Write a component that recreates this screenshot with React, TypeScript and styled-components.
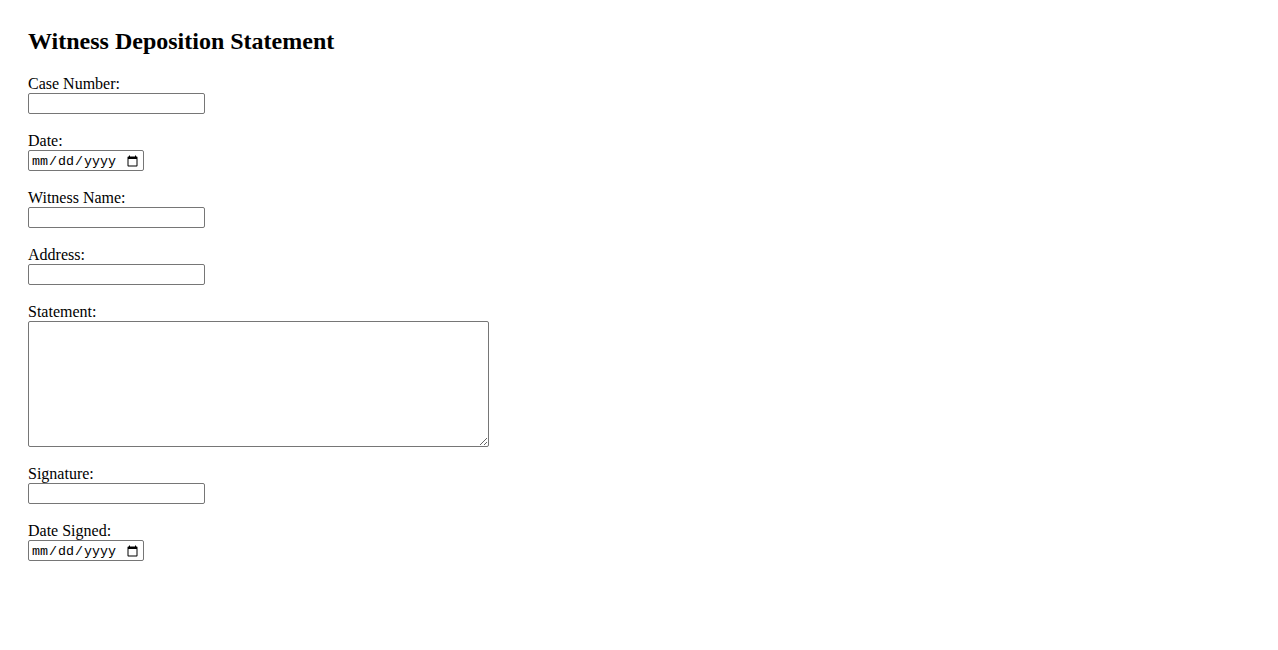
import React from "react";
import styled, { createGlobalStyle } from "styled-components";

const Global = createGlobalStyle`
  html, body { margin: 0; padding: 0; background: #fff; }
  body {
    padding: 28px;
    font-family: "Liberation Serif", "Times New Roman", serif;
    font-size: 16px;
    color: #000;
  }
`;

const Page = styled.div`
  display: flex;
  flex-direction: column;
`;

const Title = styled.h2`
  margin: 0 0 20px 0;
  font-size: 24px;
  font-weight: bold;
  line-height: 27px;
`;

const Form = styled.form`
  display: flex;
  flex-direction: column;
  gap: 18px;
`;

const Field = styled.div`
  display: flex;
  flex-direction: column;
  align-items: flex-start;
`;

const Label = styled.label`
  display: block;
  line-height: 18px;
  height: 18px;
`;

const TextInput = styled.input`
  box-sizing: border-box;
  width: 177px;
  height: 21px;
  margin: 0;
  padding: 1px 2px;
  border: 1px solid #767676;
  border-radius: 2px;
  font-family: "Liberation Sans", Arial, sans-serif;
  font-size: 13.33px;
  background: #fff;
`;

const DateInput = styled.input`
  box-sizing: border-box;
  width: 116px;
  height: 21px;
  margin: 0;
  padding: 2px 2px 0 2px;
  border: 1px solid #767676;
  border-radius: 2px;
  font-family: "Liberation Mono", monospace;
  font-size: 13.33px;
  background: #fff;
`;

const TextArea = styled.textarea`
  box-sizing: border-box;
  width: 461px;
  height: 126px;
  margin: 0;
  padding: 2px;
  border: 1px solid #767676;
  border-radius: 2px;
  font-family: "Liberation Mono", monospace;
  font-size: 13.33px;
  background: #fff;
  resize: both;
`;

const fields: { id: string; label: string; kind: "text" | "date" | "area" }[] = [
  { id: "case", label: "Case Number:", kind: "text" },
  { id: "date", label: "Date:", kind: "date" },
  { id: "name", label: "Witness Name:", kind: "text" },
  { id: "address", label: "Address:", kind: "text" },
  { id: "statement", label: "Statement:", kind: "area" },
  { id: "signature", label: "Signature:", kind: "text" },
  { id: "signed", label: "Date Signed:", kind: "date" },
];

export default function App() {
  return (
    <>
      <Global />
      <Page>
        <Title>Witness Deposition Statement</Title>
        <Form onSubmit={(e) => e.preventDefault()}>
          {fields.map((f) => (
            <Field key={f.id}>
              <Label htmlFor={f.id}>{f.label}</Label>
              {f.kind === "text" && <TextInput id={f.id} type="text" />}
              {f.kind === "date" && <DateInput id={f.id} type="date" />}
              {f.kind === "area" && <TextArea id={f.id} />}
            </Field>
          ))}
        </Form>
      </Page>
    </>
  );
}
